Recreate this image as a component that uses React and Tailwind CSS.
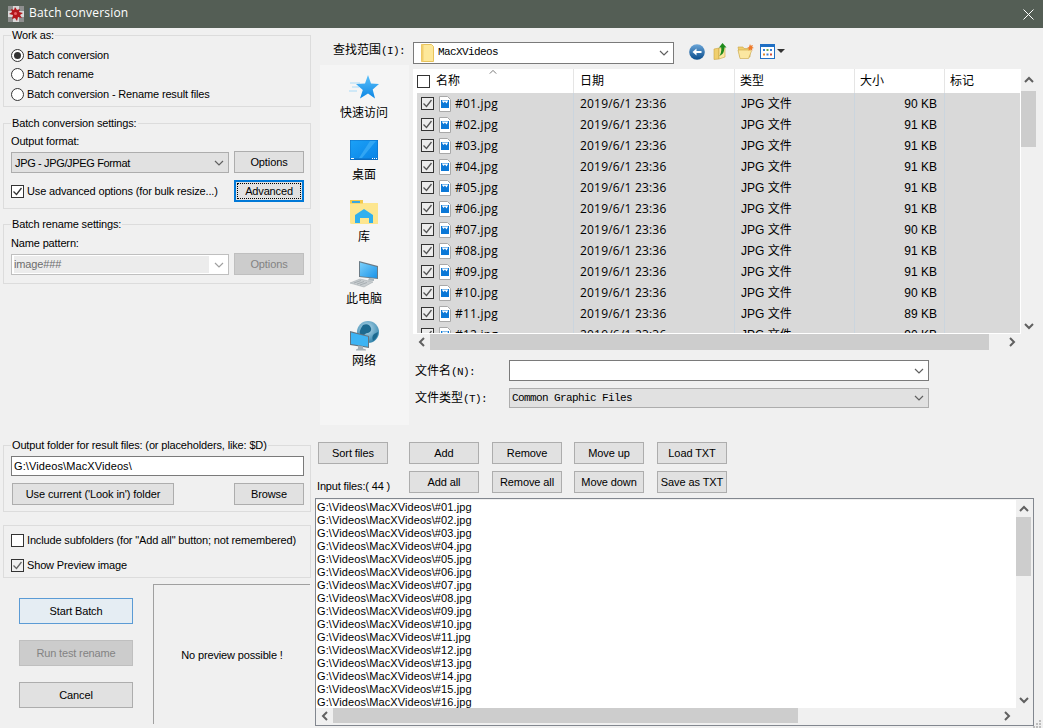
import React from 'react';

const sizes = [90, 91, 91, 91, 91, 91, 90, 91, 91, 90, 89, 90];
const files = sizes.map((size, i) => ({ name: `#${String(i + 1).padStart(2, '0')}.jpg`, size }));
const inputFiles = Array.from({ length: 17 }, (_, i) => `G:\\Videos\\MacXVideos\\#${String(i + 1).padStart(2, '0')}.jpg`);

const Chevron = ({ dir = 'down', color = '#606060', width = 1.2, size = 10 }) => {
    const paths = {
        down: 'M1 3l4 4 4-4',
        up: 'M1 7l4-4 4 4',
        left: 'M7 1L3 5l4 4',
        right: 'M3 1l4 4-4 4',
    };
    return (
        <svg width={size} height={size} viewBox="0 0 10 10" fill="none" className="shrink-0">
            <path d={paths[dir]} stroke={color} strokeWidth={width} />
        </svg>
    );
};

const Check = ({ color = '#333' }) => (
    <svg width="11" height="11" viewBox="0 0 11 11" fill="none">
        <path d="M1.5 5.5l3 3 5-6.5" stroke={color} strokeWidth="1.3" />
    </svg>
);

const Checkbox = ({ checked, className = 'bg-white', color }) => (
    <span className={`w-[13px] h-[13px] shrink-0 border border-[#333] flex items-center justify-center ${className}`}>
        {checked && <Check color={color} />}
    </span>
);

const Radio = ({ label, checked, className = 'h-[19px]' }) => (
    <div className={`flex items-center pl-[7px] ${className}`}>
        <span className="w-[13px] h-[13px] rounded-full border border-[#333] bg-white flex items-center justify-center">
            {checked && <span className="w-[7px] h-[7px] rounded-full bg-[#333]" />}
        </span>
        <span className="ml-[3px]">{label}</span>
    </div>
);

const Button = ({ children, className = 'w-[70px]', disabled }) => (
    <div className={`h-[22px] shrink-0 border flex items-center justify-center tracking-[-0.1px] ${disabled ? 'bg-[#cccccc] border-[#bfbfbf] text-[#838383]' : 'bg-[#e1e1e1] border-[#adadad]'} ${className}`}>
        {children}
    </div>
);

const Group = ({ title, className, children }) => (
    <fieldset className={`border border-[#dcdcdc] min-w-0 ${className}`}>
        <legend className="ml-[7px] px-[1px] h-[14px] leading-[14px]">{title}</legend>
        {children}
    </fieldset>
);

const AppIcon = () => (
    <svg width="16" height="16" viewBox="0 0 16 16" className="shrink-0">
        <rect width="16" height="16" fill="#d8d8d8" />
        <path d="M0 0h5v5H0zM11 0h5v5h-5zM0 11h5v5H0zM11 11h5v5h-5z" fill="#8f8f8f" />
        <path d="M7 1l2 3 3-1-1 3 4 1-3 2 2 3-4-1-1 4-2-3-3 1 1-4-4-1 3-2-1-3 3 1z" fill="#b3161b" />
        <circle cx="7.5" cy="7.5" r="1.5" fill="#e8656a" />
    </svg>
);

const YellowFolder = () => (
    <svg width="13" height="18" viewBox="0 0 13 18">
        <path d="M.5.5h10l2 2v15H.5z" fill="#fde89a" stroke="#e7c35c" />
        <path d="M.5.5h2v17h-2z" fill="#f2cf6f" />
    </svg>
);

const BackIcon = () => (
    <svg width="16" height="16" viewBox="0 0 16 16">
        <defs>
            <linearGradient id="backBlue" x1="0" y1="0" x2="0" y2="1">
                <stop offset="0" stopColor="#6aa5d8" />
                <stop offset="1" stopColor="#0a4d8c" />
            </linearGradient>
        </defs>
        <circle cx="8" cy="8" r="7.8" fill="url(#backBlue)" />
        <path d="M3.5 8L7.5 4.5V7h5v2h-5v2.5z" fill="#fff" />
    </svg>
);

const UpIcon = () => (
    <svg width="15" height="17" viewBox="0 0 15 17">
        <path d="M1 6l5-1v11l-5 .5z" fill="#f0cf6e" stroke="#c9a544" strokeWidth=".6" />
        <path d="M6 5h6v9l-6 2z" fill="#fbe7a1" stroke="#c9a544" strokeWidth=".6" />
        <path d="M9.5 0l4 4.5h-2.2c0 4-1 7-5 8.5 1.5-2 2.200-4.500 2-8.500H6z" fill="#1e8a1c" />
    </svg>
);

const NewFolderIcon = () => (
    <svg width="17" height="15" viewBox="0 0 17 15">
        <path d="M1 3h5l1 1.500h6V13H3z" fill="#f0cf6e" stroke="#c9a544" strokeWidth=".6" />
        <path d="M3 14.500L1 6h12.500l1 1-3 7.500z" fill="#fbe7a1" stroke="#c9a544" strokeWidth=".6" />
        <path d="M13 0l.8 1.800L16 1l-.9 2 1.900 1-2 .6.4 2.200-2-1.200-1.800 1.200.3-2.200-1.900-.7 2-.9z" fill="#ee7a2a" />
    </svg>
);

const ViewIcon = () => (
    <svg width="26" height="15" viewBox="0 0 26 15">
        <rect x=".5" y=".5" width="14" height="14" fill="#fff" stroke="#1f6fc4" />
        <rect x="1" y="1" width="13" height="2" fill="#1f6fc4" />
        <path d="M3 5h2v2H3z" fill="#3b7fd4" />
        <path d="M6.500 5h2v2h-2z" fill="#6aa84f" />
        <path d="M10 5h2v2h-2z" fill="#3b7fd4" />
        <path d="M3 9.500h2v2H3z" fill="#e08a2c" />
        <path d="M6.500 9.500h2v2h-2z" fill="#3b7fd4" />
        <path d="M10 9.500h2v2h-2z" fill="#d0503c" />
        <path d="M17 5h8l-4 4z" fill="#333" />
    </svg>
);

const StarIcon = () => (
    <svg width="30" height="26" viewBox="0 0 30 26">
        <defs>
            <linearGradient id="starBlue" x1="0" y1="0" x2="0" y2="1">
                <stop offset="0" stopColor="#5cc1fb" />
                <stop offset="1" stopColor="#0c86e4" />
            </linearGradient>
        </defs>
        <path d="M1 8h10M3 12h7M0 16h8" stroke="#a9dbf8" strokeWidth="1" />
        <path d="M19 0l3 8.500 8 .5-6.300 5.500 2.300 9-7-5-8 5 2.800-8.500L7 9l9-.5z" fill="url(#starBlue)" />
    </svg>
);

const DesktopIcon = () => (
    <svg width="28" height="20" viewBox="0 0 28 20">
        <defs>
            <linearGradient id="deskBlue" x1="0" y1="0" x2="1" y2="1">
                <stop offset="0" stopColor="#1ba1f7" />
                <stop offset="1" stopColor="#0a84e6" />
            </linearGradient>
        </defs>
        <rect width="28" height="20" fill="#0d6cc0" />
        <rect x=".5" y=".5" width="27" height="18" fill="url(#deskBlue)" />
        <path d="M9 18L20 1h6L12 18z" fill="#4db8fa" opacity=".55" />
        <path d="M1 18h3v1H1zM22 18h1v1h-1zM24 18h1v1h-1zM26 18h1v1h-1z" fill="#fff" />
    </svg>
);

const LibraryIcon = () => (
    <svg width="28" height="24" viewBox="0 0 28 24">
        <path d="M0 1.500A1.500 1.500 0 011.500 0H11l2 3h15v21H1.500A1.500 1.500 0 010 22.500z" fill="#fde68f" />
        <path d="M0 0h13v3.500H0z" fill="#f2c94c" />
        <rect x="2" y="1" width="8" height="2" fill="#3aa8e0" />
        <path d="M14 9l9 6v8h-4v-5h-9v5H5v-8z" fill="#30b0ee" />
    </svg>
);

const ComputerIcon = () => (
    <svg width="30" height="28" viewBox="0 0 30 28">
        <defs>
            <linearGradient id="pcBlue" x1="0" y1="0" x2="1" y2="1">
                <stop offset="0" stopColor="#7bd0fb" />
                <stop offset="1" stopColor="#1a93e8" />
            </linearGradient>
        </defs>
        <path d="M10 1l19 5v13l-19-2z" fill="#6b7b86" />
        <path d="M11 2.500l17 4.500v11l-17-1.800z" fill="url(#pcBlue)" />
        <path d="M20 18l5 .5v2.500l-6-.5z" fill="#a9b4ba" />
        <path d="M1 23l10-4 13 3-9 5z" fill="#c8cdd0" stroke="#9aa2a7" strokeWidth=".5" />
        <path d="M5 23l7-2.500M8 24l7-2.500M11 25l7-2.500" stroke="#8f979c" strokeWidth=".6" />
    </svg>
);

const NetworkIcon = () => (
    <svg width="29" height="30" viewBox="0 0 29 30">
        <defs>
            <radialGradient id="globe" cx=".45" cy=".35" r=".7">
                <stop offset="0" stopColor="#b9dcee" />
                <stop offset="1" stopColor="#2a7fa8" />
            </radialGradient>
        </defs>
        <circle cx="18" cy="11" r="11" fill="url(#globe)" />
        <path d="M13 4c4-2 7 0 8 3s-2 5-4 5-3 4-6 2 0-7 2-10zM24 13l4-2c0 4-2 7-5 9-1-3-1-5 1-7z" fill="#1d6a90" />
        <path d="M0 10l19 5v12L0 24z" fill="#64747f" />
        <path d="M1 11.500l17 4.300v10L1 23z" fill="#3db4f4" />
        <path d="M8 24.500l5 .7v2.300l3 1v1H6v-1l2-1z" fill="#a4afb6" />
    </svg>
);

const FileIcon = () => (
    <svg width="12" height="16" viewBox="0 0 12 16" className="shrink-0 block">
        <path d="M.5.500h8l3 3v12H.5z" fill="#fff" stroke="#a8a8a8" />
        <rect x="2" y="4" width="8" height="8" fill="#0b78d7" />
        <path d="M3 5l1.500 2L6 5.500 7.500 7.500 9 5v-.500H3z" fill="#fff" />
    </svg>
);

const Label = ({ cjk, key_ }) => (
    <span>
        {cjk}
        <span className="font-['Liberation_Mono',monospace] text-[11px] tracking-[-0.6px]">({key_}):</span>
    </span>
);

const PlaceItem = ({ icon, label }) => (
    <div className="h-[62px] flex flex-col items-center">
        <div className="h-[27px] flex items-center justify-center">{icon}</div>
        <div className="mt-[5px] h-[14px] leading-[14px]">{label}</div>
    </div>
);

const headerCols = [
    { label: '日期', w: 'w-[161px]', pad: 'pl-[6px]' },
    { label: '类型', w: 'w-[120px]', pad: 'pl-[5px]' },
    { label: '大小', w: 'w-[90px]', pad: 'pl-[5px]' },
    { label: '标记', w: 'w-[76px]', pad: 'pl-[5px]' },
];

function FileList() {
    return (
        <div className="w-[608px]">
            <div className="h-[24px] bg-white flex text-[12px]">
                <div className="w-[161px] border-r border-[#e5e5e5] flex items-center pl-[4px] relative">
                    <Checkbox />
                    <span className="ml-[6px]">名称</span>
                    <span className="absolute left-[76px] top-[-1px]"><Chevron dir="up" size={8} color="#555" width={1} /></span>
                </div>
                {headerCols.map((col) => (
                    <div key={col.label} className={`${col.w} ${col.pad} border-r border-[#e5e5e5] last:border-r-0 flex items-center`}>
                        {col.label}
                    </div>
                ))}
            </div>
            <div className="h-[240px] overflow-hidden pl-[4px] pr-[1px] bg-white">
                {files.map((f) => (
                    <div key={f.name} className="h-[21px] bg-[#d9d9d9] flex items-center text-[12px]">
                        <div className="w-[157px] h-full border-r border-[#cbd5de] flex items-center pl-[4px]">
                            <Checkbox checked className="bg-[#ececec]" color="#555" />
                            <span className="ml-[5px]"><FileIcon /></span>
                            <span className="ml-[4px] font-['Open_Sans',sans-serif] tracking-[0.2px]">{f.name}</span>
                        </div>
                        <div className="w-[161px] h-full border-r border-[#cbd5de] flex items-center pl-[6px] font-['Open_Sans',sans-serif] tracking-[0.2px]">2019/6/1 23:36</div>
                        <div className="w-[120px] h-full border-r border-[#cbd5de] flex items-center pl-[6px]">JPG 文件</div>
                        <div className="w-[90px] h-full border-r border-[#cbd5de] flex items-center justify-end pr-[7px]">{f.size} KB</div>
                    </div>
                ))}
            </div>
            <div className="h-[1px] bg-white" />
            <div className="h-[16px] flex">
                <div className="w-[17px] flex items-center justify-center pl-[1px]"><Chevron dir="left" width={2} /></div>
                <div className="w-[559px] bg-[#cdcdcd]" />
                <div className="w-[32px] flex items-center justify-end pr-[4px]"><Chevron dir="right" width={2} /></div>
            </div>
        </div>
    );
}

export default function App() {
    return (
        <div className="w-[1043px] h-[728px] overflow-hidden bg-[#f0f0f0] text-black text-[11px] tracking-[-0.15px] font-['Liberation_Sans','Noto_Sans_CJK_SC',sans-serif] relative">
            <div className="h-[28px] bg-[#545e55] flex items-center pl-[8px] pr-[8px] text-white">
                <AppIcon />
                <span className="ml-[5px] mb-[2px] text-[12px] tracking-[0.2px] font-['Open_Sans',sans-serif]">Batch conversion</span>
                <svg width="11" height="11" viewBox="0 0 11 11" className="ml-auto mr-[1px]">
                    <path d="M.5.500l10 10M10.500.500l-10 10" stroke="#fff" strokeWidth="1" />
                </svg>
            </div>

            <div className="flex h-[700px]">
                {/* left column */}
                <div className="w-[311px] shrink-0 pl-[3px] flex flex-col">
                    <Group title="Work as:" className="h-[79px] w-[308px]">
                        <div className="mt-[4px]">
                            <Radio label="Batch conversion" checked />
                            <Radio label="Batch rename" />
                            <Radio label="Batch conversion - Rename result files" className="h-[20px]" />
                        </div>
                    </Group>

                    <Group title="Batch conversion settings:" className="h-[93px] w-[308px] mt-[9px]">
                        <div className="pl-[7px]">
                            <div className="mt-[4px] h-[14px] leading-[14px]">Output format:</div>
                            <div className="mt-[3px] flex items-start">
                                <div className="mt-[1px] w-[218px] h-[21px] bg-[#e1e1e1] border border-[#adadad] flex items-center justify-between pl-[3px] pr-[4px] pt-[1px]">
                                    <span className="tracking-[-0.35px]">JPG - JPG/JPEG Format</span>
                                    <Chevron />
                                </div>
                                <Button className="w-[70px] ml-[5px]">Options</Button>
                            </div>
                            <div className="mt-[7px] flex items-center">
                                <Checkbox checked />
                                <span className="ml-[3px] w-[207px] pt-[1px]">Use advanced options (for bulk resize...)</span>
                                <div className="w-[70px] h-[22px] bg-[#e1e1e1] border-2 border-[#0078d7] p-[1px]">
                                    <div className="w-full h-full border border-dotted border-black flex items-center justify-center">Advanced</div>
                                </div>
                            </div>
                        </div>
                    </Group>

                    <Group title="Batch rename settings:" className="h-[67px] w-[308px] mt-[8px]">
                        <div className="pl-[7px]">
                            <div className="mt-[5px] h-[14px] leading-[14px]">Name pattern:</div>
                            <div className="mt-[3px] flex items-start">
                                <div className="mt-[1px] w-[218px] h-[21px] bg-white border border-[#bfbfbf] flex items-center justify-between pl-[2px] pr-[4px] py-[1px]">
                                    <span className="w-[195px] h-full bg-[#ececec] text-[#6d6d6d] leading-[17px]">image###</span>
                                    <Chevron color="#a0a0a0" />
                                </div>
                                <Button className="w-[70px] ml-[5px]" disabled>Options</Button>
                            </div>
                        </div>
                    </Group>

                    <Group title="Output folder for result files: (or placeholders, like: $D)" className="h-[74px] w-[308px] mt-[154px]">
                        <div className="pl-[7px]">
                            <div className="mt-[4px] w-[293px] h-[20px] bg-white border border-[#7a7a7a] flex items-center pl-[2px] tracking-[0.1px]">G:\Videos\MacXVideos\</div>
                            <div className="mt-[7px] flex">
                                <Button className="w-[162px] ml-[1px]">Use current ('Look in') folder</Button>
                                <Button className="w-[70px] ml-[60px]">Browse</Button>
                            </div>
                        </div>
                    </Group>

                    <div className="mt-[13px] h-[53px] w-[308px] border border-[#dcdcdc] pl-[7px] pt-[2px]">
                        <div className="h-[25px] flex items-center">
                            <Checkbox />
                            <span className="ml-[3px]">Include subfolders (for "Add all" button; not remembered)</span>
                        </div>
                        <div className="h-[24px] flex items-center">
                            <Checkbox checked className="bg-[#f0f0f0]" color="#666" />
                            <span className="ml-[3px]">Show Preview image</span>
                        </div>
                    </div>

                    <div className="flex">
                        <div className="w-[150px] pl-[16px] pt-[20px]">
                            <div className="w-[114px] h-[26px] bg-[#e5edf3] border border-[#5b9bd5] flex items-center justify-center">Start Batch</div>
                            <div className="mt-[16px] w-[114px] h-[26px] bg-[#cccccc] border border-[#bfbfbf] text-[#838383] flex items-center justify-center">Run test rename</div>
                            <div className="mt-[16px] w-[114px] h-[26px] bg-[#e1e1e1] border border-[#adadad] flex items-center justify-center">Cancel</div>
                        </div>
                        <div className="mt-[6px] w-[157px] h-[140px] border-l border-t border-[#a0a0a0] flex items-center justify-center pt-[1px]">No preview possible !</div>
                    </div>
                </div>

                {/* right column */}
                <div className="flex-1 min-w-0 flex flex-col tracking-normal">
                    <div className="h-[410px] pl-[9px]">
                        <div className="h-[37px] flex items-center text-[12px]">
                            <div className="w-[93px] pl-[13px] pt-[8px] h-full flex items-center"><Label cjk="查找范围" key_="I" /></div>
                            <div className="w-[261px] h-[22px] mt-[12px] bg-white border border-[#7a7a7a] flex items-center pl-[7px] pr-[4px]">
                                <YellowFolder />
                                <span className="ml-[4px] font-['Liberation_Mono',monospace] text-[11px] tracking-[-0.6px]">MacXVideos</span>
                                <span className="ml-auto"><Chevron /></span>
                            </div>
                            <div className="mt-[10px] ml-[15px] flex items-center">
                                <BackIcon />
                                <span className="ml-[8px]"><UpIcon /></span>
                                <span className="ml-[9px]"><NewFolderIcon /></span>
                                <span className="ml-[6px]"><ViewIcon /></span>
                            </div>
                        </div>
                        <div className="flex">
                            <div className="w-[89px] h-[360px] bg-[#f5f5f5] pt-[9px] pr-[1px] text-[12px] shrink-0">
                                <PlaceItem icon={<StarIcon />} label="快速访问" />
                                <PlaceItem icon={<DesktopIcon />} label="桌面" />
                                <PlaceItem icon={<LibraryIcon />} label="库" />
                                <PlaceItem icon={<ComputerIcon />} label="此电脑" />
                                <PlaceItem icon={<NetworkIcon />} label="网络" />
                            </div>
                            <div className="pl-[4px] pt-[4px]">
                                <div className="flex">
                                    <FileList />
                                    <div className="w-[15px] h-[265px] flex flex-col items-center">
                                        <div className="h-[22px] flex items-center"><Chevron dir="up" width={2} /></div>
                                        <div className="w-[15px] h-[56px] bg-[#cdcdcd]" />
                                        <div className="flex-1" />
                                        <div className="h-[16px] flex items-center"><Chevron dir="down" width={2} /></div>
                                    </div>
                                </div>
                                <div className="mt-[10px] flex items-center h-[21px] text-[12px]">
                                    <div className="w-[96px] pl-[2px] pt-[1px]"><Label cjk="文件名" key_="N" /></div>
                                    <div className="w-[420px] h-[21px] bg-white border border-[#7a7a7a] flex items-center justify-end pr-[4px]"><Chevron /></div>
                                </div>
                                <div className="mt-[7px] flex items-center h-[20px] text-[12px]">
                                    <div className="w-[96px] pl-[2px]"><Label cjk="文件类型" key_="T" /></div>
                                    <div className="w-[420px] h-[20px] bg-[#e1e1e1] border border-[#adadad] flex items-center justify-between pl-[2px] pr-[4px]">
                                        <span className="font-['Liberation_Mono',monospace] text-[11px] tracking-[-0.6px]">Common Graphic Files</span>
                                        <Chevron />
                                    </div>
                                </div>
                            </div>
                        </div>
                    </div>

                    <div className="pl-[7px] pt-[4px]">
                        <div className="flex">
                            <Button>Sort files</Button>
                            <Button className="w-[70px] ml-[21px]">Add</Button>
                            <Button className="w-[70px] ml-[13px]">Remove</Button>
                            <Button className="w-[70px] ml-[12px]">Move up</Button>
                            <Button className="w-[70px] ml-[13px]">Load TXT</Button>
                        </div>
                        <div className="flex mt-[7px]">
                            <div className="w-[91px] -ml-[1px] pt-[8px] leading-[14px] h-[22px] tracking-[-0.15px]">Input files:( 44 )</div>
                            <Button className="w-[70px] ml-[1px]">Add all</Button>
                            <Button className="w-[70px] ml-[13px]">Remove all</Button>
                            <Button className="w-[70px] ml-[12px]">Move down</Button>
                            <Button className="w-[70px] ml-[13px]">Save as TXT</Button>
                        </div>
                    </div>
                    <div className="ml-[4px] mt-[5px] w-[719px] h-[228px] border border-[#82878f] grid grid-cols-[1fr_15px] grid-rows-[1fr_15px] pr-[2px] pb-[2px] pt-[1px]">
                        <div className="bg-white overflow-hidden pl-[1px] pt-[1px] tracking-[0.1px]">
                            {inputFiles.map((f) => (
                                <div key={f} className="h-[13px] leading-[13px] whitespace-nowrap">{f}</div>
                            ))}
                        </div>
                        <div className="flex flex-col items-center">
                            <div className="h-[17px] flex items-center"><Chevron dir="up" width={2} /></div>
                            <div className="w-[15px] h-[59px] bg-[#cdcdcd]" />
                            <div className="flex-1" />
                            <div className="h-[16px] flex items-center"><Chevron dir="down" width={2} /></div>
                        </div>
                        <div className="flex">
                            <div className="w-[17px] flex items-center justify-center"><Chevron dir="left" width={2} /></div>
                            <div className="w-[465px] bg-[#cdcdcd]" />
                            <div className="flex-1 flex items-center justify-end pr-[4px]"><Chevron dir="right" width={2} /></div>
                        </div>
                        <div />
                    </div>
                </div>
            </div>

            {/* resize grip */}
            <svg width="10" height="9" viewBox="0 0 10 9" className="absolute right-[1px] bottom-[0px]">
                <path d="M7 1h2v2H7zM4 4h2v2H4zM7 4h2v2H7zM1 7h2v2H1zM4 7h2v2H4zM7 7h2v2H7z" fill="#bdbdbd" />
            </svg>
        </div>
    );
}
